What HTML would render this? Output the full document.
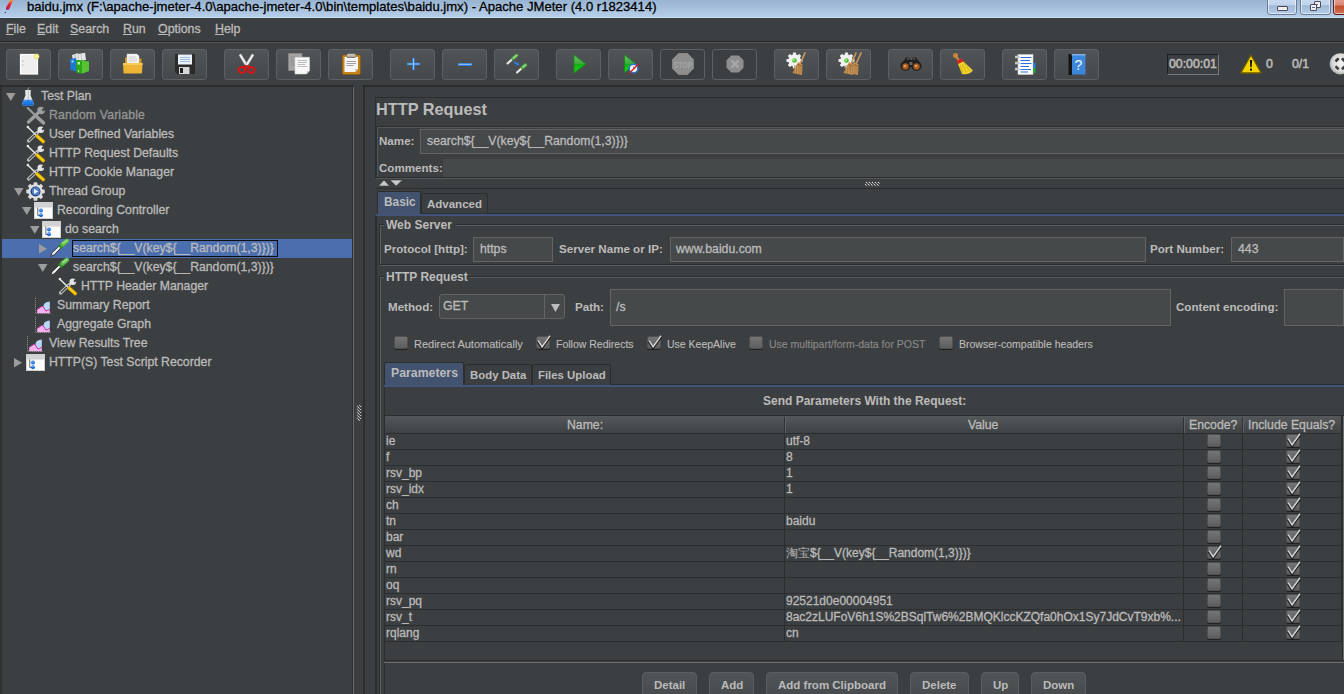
<!DOCTYPE html><html><head><meta charset="utf-8"><style>
html,body{margin:0;padding:0;}
body{width:1344px;height:694px;overflow:hidden;position:relative;background:#3c3f41;font-family:"Liberation Sans",sans-serif;}
.a{position:absolute;}
.t{position:absolute;white-space:pre;line-height:0;-webkit-text-stroke:0.3px currentColor;}
u{text-decoration:underline;text-underline-offset:1px;}
</style></head><body>
<div class="a" style="left:0px;top:0px;width:1344px;height:18px;background:linear-gradient(#98b3d1,#b8d0ea);"></div>
<div class="a" style="left:0px;top:17px;width:1344px;height:1px;background:#c8ddf4;"></div>
<div class="t" style="left:27px;top:7px;font-size:13.1px;color:#000;">baidu.jmx (F:\apache-jmeter-4.0\apache-jmeter-4.0\bin\templates\baidu.jmx) - Apache JMeter (4.0 r1823414)</div>
<svg class="a" style="left:0px;top:0px;" width="16" height="16" viewBox="0 0 16 16"><defs><linearGradient id="fth" x1="0" y1="0" x2="0" y2="1"><stop offset="0" stop-color="#ff9a10"/><stop offset="0.45" stop-color="#e8203a"/><stop offset="0.8" stop-color="#c8203a"/><stop offset="1" stop-color="#8a2a9a"/></linearGradient></defs><path d="M13.2 0 L10.5 0 L6 7.5 L6 10 L9 9.5 Z" fill="url(#fth)"/><circle cx="5.4" cy="12.5" r="0.7" fill="#4a2a8a"/></svg>
<div class="a" style="left:1267px;top:-3px;width:30px;height:18px;box-sizing:border-box;border:1px solid #6a7d96;border-radius:3px;background:linear-gradient(#c9dbef 0%,#c0d4eb 42%,#9fb9d6 48%,#b5cde8 100%);box-shadow:inset 0 0 0 1px rgba(255,255,255,.55);"><div class="a" style="left:9px;top:8px;width:9px;height:3px;border:1px solid #4a4a5a;border-radius:1px;background:#eee;"></div></div>
<div class="a" style="left:1300px;top:-3px;width:31px;height:18px;box-sizing:border-box;border:1px solid #6a7d96;border-radius:3px;background:linear-gradient(#c9dbef 0%,#c0d4eb 42%,#9fb9d6 48%,#b5cde8 100%);box-shadow:inset 0 0 0 1px rgba(255,255,255,.55);"><div class="a" style="left:13px;top:3px;width:5px;height:5px;border:1px solid #4a4a5a;border-radius:1px;background:#eee;"><div class="a" style="left:1px;top:2px;width:2px;height:1px;background:#5a6a90;"></div></div><div class="a" style="left:9px;top:6px;width:5px;height:5px;border:1px solid #4a4a5a;border-radius:1px;background:#eee;"><div class="a" style="left:1px;top:2px;width:3px;height:1px;background:#5a6a90;"></div></div></div>
<div class="a" style="left:1333px;top:-3px;width:30px;height:18px;box-sizing:border-box;border:1px solid #5b1d1d;border-radius:3px;background:linear-gradient(#e8a493 0%,#d98672 45%,#c1502f 50%,#cf7156 100%);box-shadow:inset 0 0 0 1px rgba(255,255,255,.55);"></div>
<div class="a" style="left:0px;top:18px;width:1344px;height:23px;background:#3c3f41;"></div>
<div class="a" style="left:0px;top:41px;width:1344px;height:1px;background:#262729;"></div>
<div class="a" style="left:0px;top:42px;width:1344px;height:1px;background:#555759;"></div>
<div class="t" style="left:6px;top:29px;font-size:12.4px;color:#bbbbbb;"><u>F</u>ile</div>
<div class="t" style="left:37px;top:29px;font-size:12.4px;color:#bbbbbb;"><u>E</u>dit</div>
<div class="t" style="left:70px;top:29px;font-size:12.4px;color:#bbbbbb;"><u>S</u>earch</div>
<div class="t" style="left:123px;top:29px;font-size:12.4px;color:#bbbbbb;"><u>R</u>un</div>
<div class="t" style="left:158px;top:29px;font-size:12.4px;color:#bbbbbb;"><u>O</u>ptions</div>
<div class="t" style="left:215px;top:29px;font-size:12.4px;color:#bbbbbb;"><u>H</u>elp</div>
<div class="a" style="left:0px;top:43px;width:1344px;height:42px;background:#3c3f41;"></div>
<div class="a" style="left:0px;top:85px;width:354px;height:2px;background:#2a2c2e;"></div>
<div class="a" style="left:363px;top:85px;width:981px;height:2px;background:#2a2c2e;"></div>
<div class="a" style="left:6px;top:49px;width:45px;height:31px;box-sizing:border-box;border:1px solid #5e6163;border-radius:3px;background:linear-gradient(#505456,#45494b);"></div>
<div class="a" style="left:58px;top:49px;width:45px;height:31px;box-sizing:border-box;border:1px solid #5e6163;border-radius:3px;background:linear-gradient(#505456,#45494b);"></div>
<div class="a" style="left:110px;top:49px;width:45px;height:31px;box-sizing:border-box;border:1px solid #5e6163;border-radius:3px;background:linear-gradient(#505456,#45494b);"></div>
<div class="a" style="left:162px;top:49px;width:45px;height:31px;box-sizing:border-box;border:1px solid #5e6163;border-radius:3px;background:linear-gradient(#505456,#45494b);"></div>
<div class="a" style="left:224px;top:49px;width:45px;height:31px;box-sizing:border-box;border:1px solid #5e6163;border-radius:3px;background:linear-gradient(#505456,#45494b);"></div>
<div class="a" style="left:276px;top:49px;width:45px;height:31px;box-sizing:border-box;border:1px solid #5e6163;border-radius:3px;background:linear-gradient(#505456,#45494b);"></div>
<div class="a" style="left:328px;top:49px;width:45px;height:31px;box-sizing:border-box;border:1px solid #5e6163;border-radius:3px;background:linear-gradient(#505456,#45494b);"></div>
<div class="a" style="left:390px;top:49px;width:45px;height:31px;box-sizing:border-box;border:1px solid #5e6163;border-radius:3px;background:linear-gradient(#505456,#45494b);"></div>
<div class="a" style="left:442px;top:49px;width:45px;height:31px;box-sizing:border-box;border:1px solid #5e6163;border-radius:3px;background:linear-gradient(#505456,#45494b);"></div>
<div class="a" style="left:494px;top:49px;width:45px;height:31px;box-sizing:border-box;border:1px solid #5e6163;border-radius:3px;background:linear-gradient(#505456,#45494b);"></div>
<div class="a" style="left:556px;top:49px;width:45px;height:31px;box-sizing:border-box;border:1px solid #5e6163;border-radius:3px;background:linear-gradient(#505456,#45494b);"></div>
<div class="a" style="left:608px;top:49px;width:45px;height:31px;box-sizing:border-box;border:1px solid #5e6163;border-radius:3px;background:linear-gradient(#505456,#45494b);"></div>
<div class="a" style="left:660px;top:49px;width:45px;height:31px;box-sizing:border-box;border:1px solid #5e6163;border-radius:3px;background:#3c3f41;"></div>
<div class="a" style="left:712px;top:49px;width:45px;height:31px;box-sizing:border-box;border:1px solid #5e6163;border-radius:3px;background:#3c3f41;"></div>
<div class="a" style="left:774px;top:49px;width:45px;height:31px;box-sizing:border-box;border:1px solid #5e6163;border-radius:3px;background:linear-gradient(#505456,#45494b);"></div>
<div class="a" style="left:826px;top:49px;width:45px;height:31px;box-sizing:border-box;border:1px solid #5e6163;border-radius:3px;background:linear-gradient(#505456,#45494b);"></div>
<div class="a" style="left:888px;top:49px;width:45px;height:31px;box-sizing:border-box;border:1px solid #5e6163;border-radius:3px;background:linear-gradient(#505456,#45494b);"></div>
<div class="a" style="left:940px;top:49px;width:45px;height:31px;box-sizing:border-box;border:1px solid #5e6163;border-radius:3px;background:linear-gradient(#505456,#45494b);"></div>
<div class="a" style="left:1002px;top:49px;width:45px;height:31px;box-sizing:border-box;border:1px solid #5e6163;border-radius:3px;background:linear-gradient(#505456,#45494b);"></div>
<div class="a" style="left:1054px;top:49px;width:45px;height:31px;box-sizing:border-box;border:1px solid #5e6163;border-radius:3px;background:linear-gradient(#505456,#45494b);"></div>
<div class="a" style="left:1167px;top:54px;width:52px;height:21px;box-sizing:border-box;border:1px solid;border-color:#1e1f20 #77797b #77797b #1e1f20;background:#3c3f41;"></div>
<div class="t" style="left:1169px;top:64px;font-size:12.3px;color:#bbbbbb;-webkit-text-stroke:0.55px currentColor;">00:00:01</div>
<div class="t" style="left:1266px;top:64px;font-size:12.3px;color:#bbbbbb;-webkit-text-stroke:0.55px currentColor;">0</div>
<div class="t" style="left:1292px;top:64px;font-size:12.3px;color:#bbbbbb;-webkit-text-stroke:0.55px currentColor;">0/1</div>
<svg class="a" style="left:1240px;top:54px;" width="22" height="20" viewBox="0 0 22 20"><path d="M11 1 L21.2 19 L0.8 19Z" fill="#f6d400" stroke="#6e5c00" stroke-width="1.3" stroke-linejoin="round"/><path d="M9.9 6 H12.1 L11.7 13.2 H10.3Z" fill="#111"/><rect x="10" y="14.6" width="2" height="2" fill="#111"/></svg>
<svg class="a" style="left:1329px;top:53px;" width="15" height="22" viewBox="0 0 15 22"><defs><radialGradient id="rb" cx="0.55" cy="0.45" r="0.6"><stop offset="0" stop-color="#f4f4f4"/><stop offset="0.7" stop-color="#d8d8d8"/><stop offset="1" stop-color="#a0a0a0"/></radialGradient></defs><circle cx="11.3" cy="10.8" r="10.6" fill="url(#rb)"/><rect x="5.900000000000001" y="5.6000000000000005" width="4.4" height="2.6" rx="0.6" fill="#3a3a3a" transform="rotate(-45 8.100000000000001 6.9)"/><rect x="5.900000000000001" y="13.4" width="4.4" height="2.6" rx="0.6" fill="#3a3a3a" transform="rotate(45 8.100000000000001 14.700000000000001)"/><rect x="12.3" y="5.6000000000000005" width="4.4" height="2.6" rx="0.6" fill="#3a3a3a" transform="rotate(45 14.5 6.9)"/><rect x="12.3" y="13.4" width="4.4" height="2.6" rx="0.6" fill="#3a3a3a" transform="rotate(-45 14.5 14.700000000000001)"/></svg>
<svg class="a" style="left:19px;top:53px;overflow:visible" width="22" height="22" viewBox="0 0 22 22"><rect x="1.5" y="1.5" width="17" height="19.5" fill="#eeeeee" stroke="#ffffff" stroke-width="1.2"/><circle cx="17.5" cy="3.5" r="2.8" fill="#f2e27a"/><circle cx="17.5" cy="3.5" r="1.4" fill="#fff8c0"/><circle cx="3.8" cy="8" r="0.55" fill="#777"/><circle cx="3.8" cy="12" r="0.55" fill="#777"/></svg>
<svg class="a" style="left:69px;top:52px;overflow:visible" width="22" height="23" viewBox="0 0 22 23"><path d="M3 3 L9 1 L10 8 L4 10Z" fill="#dedede"/><path d="M9 2 L16 0.8 L17 8 L10 9Z" fill="#e8e8e8"/><path d="M6 3 L7 9 M12 2 L13 9" stroke="#aaa" stroke-width="0.6"/><path d="M1 7 L7 6 L7.5 19.5 L1.5 18Z" fill="#1c78d0"/><path d="M2.5 8.5 L4.5 8.3 L4.6 10.5 L2.6 10.7Z" fill="#9cd0ff"/><path d="M7 8 L13 8.3 L20 9.8 L20 19 L13 21.5 L7.5 21Z" fill="#2aa81a"/><path d="M13 8.3 L20 9.8 L20 19 L13 21.5Z" fill="#56c234"/><path d="M8.5 10 L11 10 L11 12.5 L8.5 12.5Z" fill="#b8ffa0"/><circle cx="9.5" cy="19" r="0.7" fill="#fff"/></svg>
<svg class="a" style="left:122px;top:53px;overflow:visible" width="22" height="22" viewBox="0 0 22 22"><path d="M3 4.5 H7 L8 5.5 H19.5 V19 H3Z" fill="#cf9418"/><path d="M5 1 H15 L17 3 V12 H5Z" fill="#f6f6f6" stroke="#cfcfcf" stroke-width="0.5"/><path d="M6.5 4 H14 M6.5 6 H15 M6.5 8 H15" stroke="#bbb" stroke-width="0.7"/><path d="M1 10 H20.5 L20 19.5 Q20 20.5 19 20.5 H2.5 Q1.5 20.5 1.5 19.5Z" fill="#eeb534"/><path d="M1 10 H20.5 V12 H1Z" fill="#f6c85a"/></svg>
<svg class="a" style="left:175px;top:54px;overflow:visible" width="20" height="20" viewBox="0 0 20 20"><path d="M1 0 H19 Q20 0 20 1 V19 Q20 20 19 20 H2 L0 18 V1 Q0 0 1 0Z" fill="#2b2b2b"/><rect x="3" y="0.5" width="14" height="10" fill="#e9f1fa"/><path d="M5 3.5 H15 M5 5.5 H15 M5 7.5 H15" stroke="#8fb0d0" stroke-width="0.8"/><rect x="4" y="13" width="10.5" height="7" fill="#d6d6d6"/><rect x="5" y="14" width="3" height="5" fill="#1e1e1e"/></svg>
<svg class="a" style="left:237px;top:52px;overflow:visible" width="19" height="23" viewBox="0 0 19 23"><path d="M3 2.5 L10 14" stroke="#9a9a9a" stroke-width="3"/><path d="M3 2.5 L10 14" stroke="#f2f2f2" stroke-width="2"/><path d="M16 2.5 L9 14" stroke="#9a9a9a" stroke-width="3"/><path d="M16 2.5 L9 14" stroke="#f2f2f2" stroke-width="2"/><path d="M9.5 13.5 L6 16 M9.5 13.5 L13 16" stroke="#e01010" stroke-width="2"/><ellipse cx="5" cy="18" rx="3.3" ry="3" fill="none" stroke="#e01212" stroke-width="2"/><ellipse cx="14.2" cy="18" rx="3.3" ry="3" fill="none" stroke="#e01212" stroke-width="2"/></svg>
<svg class="a" style="left:288px;top:53px;overflow:visible" width="23" height="22" viewBox="0 0 23 22"><rect x="0.5" y="0.5" width="13.5" height="17" fill="#a4a4a4" stroke="#8a8a8a" stroke-width="0.6"/><path d="M2.5 4 H12 M2.5 6 H12 M2.5 8 H12 M2.5 10 H12 M2.5 12 H12" stroke="#8e8e8e" stroke-width="0.7"/><path d="M7 4.3 H21.5 V17.5 L18.5 21 H7Z" fill="#f8f8f8" stroke="#d4d4d4" stroke-width="0.6"/><path d="M18.5 21 V18 H21.5Z" fill="#cfcfcf"/><path d="M9.5 7.5 H19 M9.5 9.5 H19 M9.5 11.5 H17 M9.5 13.5 H19" stroke="#adadad" stroke-width="0.8"/></svg>
<svg class="a" style="left:342px;top:53px;overflow:visible" width="19" height="22" viewBox="0 0 19 22"><rect x="0.3" y="2" width="18" height="19.5" rx="1.5" fill="#c88418" stroke="#8a5a10" stroke-width="0.6"/><path d="M2.5 4 H16 V15.5 L13 19 H2.5Z" fill="#f6f6f6"/><path d="M13 19 V16 H16Z" fill="#cfcfcf"/><rect x="5" y="0.8" width="8.5" height="3.8" rx="1" fill="#bdbdb0"/><rect x="5" y="3.8" width="8.5" height="0.9" fill="#555"/><path d="M4.5 8.5 H14 M4.5 10.5 H14 M4.5 12.5 H11.5" stroke="#9a9a9a" stroke-width="0.9"/></svg>
<svg class="a" style="left:406px;top:57px;overflow:visible" width="15" height="14" viewBox="0 0 15 14"><path d="M7.5 1 V13 M1 7 H14" stroke="#2f7fdc" stroke-width="2.6"/><path d="M7.5 1.5 V12.5 M1.5 7 H13.5" stroke="#9cc8ff" stroke-width="0.9"/></svg>
<svg class="a" style="left:457px;top:62px;overflow:visible" width="16" height="5" viewBox="0 0 16 5"><path d="M1 2.5 H15" stroke="#2f7fdc" stroke-width="2.8"/><path d="M1.5 2.3 H14.5" stroke="#a8d0ff" stroke-width="0.9"/></svg>
<svg class="a" style="left:505px;top:53px;overflow:visible" width="23" height="22" viewBox="0 0 23 22"><path d="M2.5 10.5 L8.5 5" stroke="#666" stroke-width="2.8" stroke-linecap="round"/><path d="M2.5 10.5 L8.5 5" stroke="#eee" stroke-width="1.8" stroke-linecap="round"/><path d="M8.0 5.5 L11.5 2.5" stroke="#4c9a3c" stroke-width="3.6" stroke-linecap="round"/><path d="M8.5 5 L11.5 2.5" stroke="#8fd27a" stroke-width="2" stroke-linecap="round"/><path d="M12 19.5 L18 14" stroke="#666" stroke-width="2.8" stroke-linecap="round"/><path d="M12 19.5 L18 14" stroke="#eee" stroke-width="1.8" stroke-linecap="round"/><path d="M17.5 14.5 L20.5 12" stroke="#4c9a3c" stroke-width="3.6" stroke-linecap="round"/><path d="M18 14 L20.5 12" stroke="#8fd27a" stroke-width="2" stroke-linecap="round"/><path d="M9 8.5 Q10.5 10.5 12.5 11" stroke="#2a7ff0" stroke-width="1.4" fill="none"/><path d="M11 12.5 L14.5 12 L12.5 9Z" fill="#2a7ff0"/></svg>
<svg class="a" style="left:573px;top:54px;overflow:visible" width="14" height="20" viewBox="0 0 14 20"><defs><linearGradient id="gp" x1="0" y1="0" x2="0" y2="1"><stop offset="0" stop-color="#6cc46a"/><stop offset="0.5" stop-color="#3aa83a"/><stop offset="0.52" stop-color="#10b010"/><stop offset="1" stop-color="#1fd31f"/></linearGradient></defs><path d="M1 1 L13 10 L1 19Z" fill="url(#gp)" stroke="#138a13" stroke-width="0.8" stroke-linejoin="round"/></svg>
<svg class="a" style="left:623px;top:54px;overflow:visible" width="17" height="21" viewBox="0 0 17 21"><path d="M1.5 1 L13 10 L1.5 18.5Z" fill="url(#gp)" stroke="#138a13" stroke-width="0.8" stroke-linejoin="round"/><circle cx="10.5" cy="14.5" r="4.3" fill="#f4f4f4" stroke="#2e74d0" stroke-width="1.4"/><path d="M10.5 12 V14.5 H12.5" stroke="#777" stroke-width="0.7" fill="none"/><path d="M6 19.5 L15.5 10" stroke="#e01818" stroke-width="1.3"/></svg>
<svg class="a" style="left:672px;top:53px;overflow:visible" width="22" height="22" viewBox="0 0 22 22"><path d="M6.5 0.5 H15.5 L21.5 6.5 V15.5 L15.5 21.5 H6.5 L0.5 15.5 V6.5Z" fill="#8e8e8e" stroke="#9a9a9a" stroke-width="0.6"/><text x="11" y="14.6" font-family="Liberation Sans" font-weight="bold" font-size="9" text-anchor="middle" fill="#a4a4a4" textLength="19" lengthAdjust="spacingAndGlyphs">STOP</text></svg>
<svg class="a" style="left:726px;top:55px;overflow:visible" width="18" height="18" viewBox="0 0 18 18"><path d="M5.3 0.5 H12.7 L17.5 5.3 V12.7 L12.7 17.5 H5.3 L0.5 12.7 V5.3Z" fill="#8e8e8e"/><path d="M5.5 5.5 L12.5 12.5 M12.5 5.5 L5.5 12.5" stroke="#a8a8a8" stroke-width="2.4"/></svg>
<svg class="a" style="left:786px;top:52px;overflow:visible" width="22" height="24" viewBox="0 0 22 24"><rect x="6.9" y="0.5" width="3.2" height="16" rx="0.6" fill="#ececec" transform="rotate(0 8.5 8.5)"/><rect x="6.9" y="0.5" width="3.2" height="16" rx="0.6" fill="#ececec" transform="rotate(45 8.5 8.5)"/><rect x="6.9" y="0.5" width="3.2" height="16" rx="0.6" fill="#ececec" transform="rotate(90 8.5 8.5)"/><rect x="6.9" y="0.5" width="3.2" height="16" rx="0.6" fill="#ececec" transform="rotate(135 8.5 8.5)"/><circle cx="8.5" cy="8.5" r="6.2" fill="#f0f0f0"/><circle cx="8.5" cy="8.5" r="2.3" fill="#4cc02c"/><circle cx="7.9" cy="7.9" r="0.9" fill="#b8ff9a"/><g transform="translate(0 0)"><path d="M19 1 L14 12" stroke="#c4955c" stroke-width="1.8" stroke-linecap="round"/><path d="M12 10 L16.5 12.5 L16 23 L6.5 21 Z" fill="#c9955a"/><path d="M9 13 L8 21 M11 13 L10.5 22 M13 12 L13 22 M15 13 L15 22" stroke="#9a6a32" stroke-width="0.7"/><path d="M11.5 12.5 L16.5 14" stroke="#8a5a28" stroke-width="0.8"/></g></svg>
<svg class="a" style="left:838px;top:52px;overflow:visible" width="24" height="24" viewBox="0 0 24 24"><rect x="6.9" y="0.5" width="3.2" height="16" rx="0.6" fill="#ececec" transform="rotate(0 8.5 8.5)"/><rect x="6.9" y="0.5" width="3.2" height="16" rx="0.6" fill="#ececec" transform="rotate(45 8.5 8.5)"/><rect x="6.9" y="0.5" width="3.2" height="16" rx="0.6" fill="#ececec" transform="rotate(90 8.5 8.5)"/><rect x="6.9" y="0.5" width="3.2" height="16" rx="0.6" fill="#ececec" transform="rotate(135 8.5 8.5)"/><circle cx="8.5" cy="8.5" r="6.2" fill="#f0f0f0"/><circle cx="8.5" cy="8.5" r="2.3" fill="#4cc02c"/><circle cx="7.9" cy="7.9" r="0.9" fill="#b8ff9a"/><g transform="translate(-1 0)"><path d="M19 1 L14 12" stroke="#c4955c" stroke-width="1.8" stroke-linecap="round"/><path d="M12 10 L16.5 12.5 L16 23 L6.5 21 Z" fill="#c9955a"/><path d="M9 13 L8 21 M11 13 L10.5 22 M13 12 L13 22 M15 13 L15 22" stroke="#9a6a32" stroke-width="0.7"/><path d="M11.5 12.5 L16.5 14" stroke="#8a5a28" stroke-width="0.8"/></g><g transform="translate(4 0)"><path d="M19 1 L14 12" stroke="#c4955c" stroke-width="1.8" stroke-linecap="round"/><path d="M12 10 L16.5 12.5 L16 23 L6.5 21 Z" fill="#c9955a"/><path d="M9 13 L8 21 M11 13 L10.5 22 M13 12 L13 22 M15 13 L15 22" stroke="#9a6a32" stroke-width="0.7"/><path d="M11.5 12.5 L16.5 14" stroke="#8a5a28" stroke-width="0.8"/></g></svg>
<svg class="a" style="left:899px;top:56px;overflow:visible" width="24" height="16" viewBox="0 0 24 16"><path d="M4 6 L7 1.5 H10 L11 4 H13 L14 1.5 H17 L20 6 L22 11 H2Z" fill="#1f1f1f"/><circle cx="6.5" cy="10" r="5" fill="#1f1f1f"/><circle cx="17.5" cy="10" r="5" fill="#1f1f1f"/><circle cx="6.5" cy="10.5" r="3.2" fill="#a55a20"/><circle cx="17.5" cy="10.5" r="3.2" fill="#a55a20"/><circle cx="6" cy="10" r="1.3" fill="#e6a060"/><circle cx="17" cy="10" r="1.3" fill="#e6a060"/><path d="M8 3 H9.5 M14.5 3 H16" stroke="#bbb" stroke-width="0.8"/><rect x="10.5" y="6" width="3" height="3" fill="#666"/></svg>
<svg class="a" style="left:951px;top:52px;overflow:visible" width="23" height="24" viewBox="0 0 23 24"><circle cx="4.5" cy="3.5" r="2.5" fill="#c8863a"/><path d="M5 4.5 L9 10" stroke="#c8863a" stroke-width="2.2"/><path d="M5.5 9 L11 6.5 L12.5 9.5 L7 12Z" fill="#e02020"/><path d="M7 12 L12.5 9.5 L22 18.5 Q17 23.5 11 22Z" fill="#f2d22a"/><path d="M9 13.5 L12 21 M11 12 L15.5 20.5 M13 11 L19 19" stroke="#c0a000" stroke-width="0.7"/></svg>
<svg class="a" style="left:1014px;top:54px;overflow:visible" width="23" height="21" viewBox="0 0 23 21"><rect x="4" y="0.5" width="15" height="20" fill="#ffffff" stroke="#c8c8c8" stroke-width="0.6"/><path d="M6.5 3.5 H17.5 M6.5 6.5 H16 M6.5 9.5 H17.5 M6.5 12.5 H15 M6.5 15.5 H17 M6.5 18 H14" stroke="#2f6ee0" stroke-width="1.2"/><path d="M1 3 H5.5 M1 9 H5.5 M1 15 H5.5" stroke="#d8d8d8" stroke-width="2.4"/><path d="M1 3 H5.5 M1 9 H5.5 M1 15 H5.5" stroke="#888" stroke-width="0.5"/><rect x="19" y="9" width="2.5" height="5" fill="#2e7de0"/><rect x="19" y="14" width="2.5" height="5" fill="#28a838"/></svg>
<svg class="a" style="left:1068px;top:54px;overflow:visible" width="18" height="21" viewBox="0 0 18 21"><rect x="3.5" y="0.5" width="14" height="20" fill="#3c86dc"/><rect x="0.5" y="0" width="3.5" height="21" fill="#151515"/><rect x="3.5" y="0.3" width="14" height="1" fill="#a8d0ff"/><text x="10.5" y="15.5" font-family="Liberation Sans" font-size="14" text-anchor="middle" fill="#f4f8ff">?</text></svg>
<div class="a" style="left:0px;top:87px;width:352px;height:607px;background:#3c3f41;"></div>
<div class="a" style="left:0px;top:87px;width:2px;height:607px;background:#2f3133;"></div>
<div class="a" style="left:352px;top:87px;width:1px;height:607px;background:#2b2d2e;"></div>
<div class="a" style="left:353px;top:87px;width:1px;height:607px;background:#6b6d6f;"></div>
<div class="a" style="left:354px;top:87px;width:9px;height:607px;background:#3c3f41;"></div>
<div class="a" style="left:363px;top:87px;width:2px;height:607px;background:#2b2d2e;"></div>
<svg class="a" style="left:355px;top:403px" width="8" height="19" viewBox="0 0 8 19"><circle cx="4.5" cy="2.4000000000000004" r="0.6" fill="#b8b8b8"/><circle cx="5.6" cy="3.5000000000000004" r="0.6" fill="#f2f2f2"/><circle cx="2.3" cy="3.2" r="0.6" fill="#b8b8b8"/><circle cx="3.4" cy="4.300000000000001" r="0.6" fill="#f2f2f2"/><circle cx="4.5" cy="5.4" r="0.6" fill="#b8b8b8"/><circle cx="5.6" cy="6.5" r="0.6" fill="#f2f2f2"/><circle cx="2.3" cy="6.2" r="0.6" fill="#b8b8b8"/><circle cx="3.4" cy="7.300000000000001" r="0.6" fill="#f2f2f2"/><circle cx="4.5" cy="8.4" r="0.6" fill="#b8b8b8"/><circle cx="5.6" cy="9.5" r="0.6" fill="#f2f2f2"/><circle cx="2.3" cy="9.2" r="0.6" fill="#b8b8b8"/><circle cx="3.4" cy="10.299999999999999" r="0.6" fill="#f2f2f2"/><circle cx="4.5" cy="11.399999999999999" r="0.6" fill="#b8b8b8"/><circle cx="5.6" cy="12.5" r="0.6" fill="#f2f2f2"/><circle cx="2.3" cy="12.2" r="0.6" fill="#b8b8b8"/><circle cx="3.4" cy="13.299999999999999" r="0.6" fill="#f2f2f2"/><circle cx="4.5" cy="14.399999999999999" r="0.6" fill="#b8b8b8"/><circle cx="5.6" cy="15.5" r="0.6" fill="#f2f2f2"/><circle cx="2.3" cy="15.2" r="0.6" fill="#b8b8b8"/><circle cx="3.4" cy="16.3" r="0.6" fill="#f2f2f2"/><circle cx="4.5" cy="17.4" r="0.6" fill="#b8b8b8"/></svg>
<svg class="a" style="left:6px;top:93px;" width="10" height="8" viewBox="0 0 10 8"><path d="M0 0 H9.5 L4.75 8Z" fill="#9c9c9c"/></svg>
<svg class="a" style="left:22px;top:87px" width="12" height="19" viewBox="0 0 12 19"><path d="M5.5 3 L7 0.3" stroke="#aaa" stroke-width="0.9"/><path d="M3.2 3 L8.8 3 L8.6 8.5 L11.6 15.8 Q12 18.6 9.8 18.6 L2.2 18.6 Q0 18.6 0.4 15.8 L3.4 8.5 Z" fill="#e6e6e6"/><path d="M6.5 3.5 L6.5 12" stroke="#c8c8c8" stroke-width="1"/><path d="M1.7 12.8 L10.3 12.8 L11.6 16 Q11.9 18.6 9.8 18.6 L2.2 18.6 Q0.1 18.6 0.4 16Z" fill="#1b7ae8"/><path d="M2.5 13.8 L4.5 13.8 M7.5 13.8 L9.5 13.8" stroke="#8fc2ff" stroke-width="0.9"/><path d="M1 17.5 Q6 19 11 17.5" stroke="#0d5cc4" stroke-width="1" fill="none"/></svg>
<div class="t" style="left:41px;top:96px;font-size:12.25px;color:#bbbbbb;">Test Plan</div>
<svg class="a" style="left:25px;top:105px" width="23" height="22" viewBox="0 0 23 22"><path d="M3.5 17 L12.5 8.5" stroke="#9d9d9d" stroke-width="3.4" stroke-linecap="round"/><circle cx="16" cy="5.5" r="3.8" fill="#9d9d9d"/><path d="M16.8 4.8 L20.5 1.2 L22 3 L18 6.5Z" fill="#3c3f41"/><path d="M2.7 3 L11.5 11.5" stroke="#9d9d9d" stroke-width="2" stroke-linecap="round"/><path d="M12 12 L18.5 17.8" stroke="#9d9d9d" stroke-width="3.6" stroke-linecap="round"/></svg>
<div class="t" style="left:49px;top:115px;font-size:12.25px;color:#959595;letter-spacing:0.15px;">Random Variable</div>
<svg class="a" style="left:25px;top:124px" width="23" height="22" viewBox="0 0 23 22"><path d="M3.5 17 L12.5 8.5" stroke="#bdbdbd" stroke-width="3.2" stroke-linecap="round"/><path d="M4.2 16.3 L11.5 9.5" stroke="#36383a" stroke-width="1.1" stroke-linecap="round"/><circle cx="15.8" cy="5.7" r="3.3" fill="#e6e6e6"/><path d="M16.4 5 L19.8 1.6 L21.4 3.2 L17.8 6.4Z" fill="#3c3f41"/><circle cx="2.8" cy="3" r="1.2" fill="#f0f0f0"/><path d="M2.7 3 L11.5 11.5" stroke="#e8e8e8" stroke-width="1.5" stroke-linecap="round"/><path d="M12.2 12.2 L18.3 17.6" stroke="#c99a00" stroke-width="3.6" stroke-linecap="round"/><path d="M12.2 12.2 L18.3 17.6" stroke="#f6cc10" stroke-width="2.3" stroke-linecap="round"/></svg>
<div class="t" style="left:49px;top:134px;font-size:12.25px;color:#bbbbbb;">User Defined Variables</div>
<svg class="a" style="left:25px;top:143px" width="23" height="22" viewBox="0 0 23 22"><path d="M3.5 17 L12.5 8.5" stroke="#bdbdbd" stroke-width="3.2" stroke-linecap="round"/><path d="M4.2 16.3 L11.5 9.5" stroke="#36383a" stroke-width="1.1" stroke-linecap="round"/><circle cx="15.8" cy="5.7" r="3.3" fill="#e6e6e6"/><path d="M16.4 5 L19.8 1.6 L21.4 3.2 L17.8 6.4Z" fill="#3c3f41"/><circle cx="2.8" cy="3" r="1.2" fill="#f0f0f0"/><path d="M2.7 3 L11.5 11.5" stroke="#e8e8e8" stroke-width="1.5" stroke-linecap="round"/><path d="M12.2 12.2 L18.3 17.6" stroke="#c99a00" stroke-width="3.6" stroke-linecap="round"/><path d="M12.2 12.2 L18.3 17.6" stroke="#f6cc10" stroke-width="2.3" stroke-linecap="round"/></svg>
<div class="t" style="left:49px;top:153px;font-size:12.25px;color:#bbbbbb;">HTTP Request Defaults</div>
<svg class="a" style="left:25px;top:162px" width="23" height="22" viewBox="0 0 23 22"><path d="M3.5 17 L12.5 8.5" stroke="#bdbdbd" stroke-width="3.2" stroke-linecap="round"/><path d="M4.2 16.3 L11.5 9.5" stroke="#36383a" stroke-width="1.1" stroke-linecap="round"/><circle cx="15.8" cy="5.7" r="3.3" fill="#e6e6e6"/><path d="M16.4 5 L19.8 1.6 L21.4 3.2 L17.8 6.4Z" fill="#3c3f41"/><circle cx="2.8" cy="3" r="1.2" fill="#f0f0f0"/><path d="M2.7 3 L11.5 11.5" stroke="#e8e8e8" stroke-width="1.5" stroke-linecap="round"/><path d="M12.2 12.2 L18.3 17.6" stroke="#c99a00" stroke-width="3.6" stroke-linecap="round"/><path d="M12.2 12.2 L18.3 17.6" stroke="#f6cc10" stroke-width="2.3" stroke-linecap="round"/></svg>
<div class="t" style="left:49px;top:172px;font-size:12.25px;color:#bbbbbb;">HTTP Cookie Manager</div>
<svg class="a" style="left:14px;top:188px;" width="10" height="8" viewBox="0 0 10 8"><path d="M0 0 H9.5 L4.75 8Z" fill="#9c9c9c"/></svg>
<svg class="a" style="left:26px;top:182px" width="19" height="19" viewBox="0 0 19 19"><rect x="7.6" y="0.2" width="3.8" height="18.6" rx="0.8" fill="#d8d8d8" transform="rotate(0 9.5 9.5)"/><rect x="7.6" y="0.2" width="3.8" height="18.6" rx="0.8" fill="#d8d8d8" transform="rotate(45 9.5 9.5)"/><rect x="7.6" y="0.2" width="3.8" height="18.6" rx="0.8" fill="#d8d8d8" transform="rotate(90 9.5 9.5)"/><rect x="7.6" y="0.2" width="3.8" height="18.6" rx="0.8" fill="#d8d8d8" transform="rotate(135 9.5 9.5)"/><circle cx="9.5" cy="9.5" r="7.2" fill="#e2e2e2"/><circle cx="9.5" cy="9.5" r="5" fill="#173f86"/><circle cx="9.7" cy="9.2" r="4" fill="#4f7fc0"/><path d="M8 6.8 L12.3 9.4 L8 12Z" fill="#f2f2f2"/></svg>
<div class="t" style="left:49px;top:191px;font-size:12.25px;color:#bbbbbb;">Thread Group</div>
<svg class="a" style="left:22px;top:207px;" width="10" height="8" viewBox="0 0 10 8"><path d="M0 0 H9.5 L4.75 8Z" fill="#9c9c9c"/></svg>
<svg class="a" style="left:34px;top:202px" width="19" height="17" viewBox="0 0 19 17"><rect x="0.5" y="0.5" width="18" height="16" fill="#fbfbfb" stroke="#d0d0d0"/><rect x="1" y="1" width="17" height="4.5" fill="#d2d2d2"/><path d="M3.8 5.5 V13.5 H6" stroke="#444" stroke-width="0.8" fill="none"/><circle cx="7" cy="8.6" r="2" fill="#1f6fe0"/><circle cx="7" cy="13.2" r="2" fill="#1f6fe0"/><path d="M5.5 8 H8.5 M5.5 12.6 H8.5" stroke="#9cc4ff" stroke-width="0.7"/></svg>
<div class="t" style="left:57px;top:210px;font-size:12.25px;color:#bbbbbb;">Recording Controller</div>
<svg class="a" style="left:30px;top:226px;" width="10" height="8" viewBox="0 0 10 8"><path d="M0 0 H9.5 L4.75 8Z" fill="#9c9c9c"/></svg>
<svg class="a" style="left:42px;top:221px" width="19" height="17" viewBox="0 0 19 17"><rect x="0.5" y="0.5" width="18" height="16" fill="#fbfbfb" stroke="#d0d0d0"/><rect x="1" y="1" width="17" height="4.5" fill="#d2d2d2"/><path d="M3.8 5.5 V13.5 H6" stroke="#444" stroke-width="0.8" fill="none"/><circle cx="7" cy="8.6" r="2" fill="#1f6fe0"/><circle cx="7" cy="13.2" r="2" fill="#1f6fe0"/><path d="M5.5 8 H8.5 M5.5 12.6 H8.5" stroke="#9cc4ff" stroke-width="0.7"/></svg>
<div class="t" style="left:65px;top:229px;font-size:12.25px;color:#bbbbbb;">do search</div>
<div class="a" style="left:2px;top:239px;width:350px;height:19px;background:#4b6eaf;"></div>
<div class="a" style="left:72px;top:240px;width:206px;height:17px;box-sizing:border-box;border:1px solid #0d0d0d;"></div>
<svg class="a" style="left:39px;top:244px;" width="8" height="10" viewBox="0 0 8 10"><path d="M0 0 V9.5 L8 4.75Z" fill="#9c9c9c"/></svg>
<svg class="a" style="left:50px;top:239px;overflow:visible" width="19" height="19" viewBox="0 0 19 19"><path d="M0.6 17.4 L2.2 13.6 L9.6 6.6 L11.4 8.4 L4.4 15.8 Z" fill="#e2e2e2" stroke="#1c1c1c" stroke-width="0.8"/><path d="M3 14.5 L10 7.5" stroke="#ffffff" stroke-width="0.9"/><path d="M9.6 8.4 L12.2 5.8" stroke="#2f8a22" stroke-width="4.6"/><path d="M12.6 5.4 L16.9 1.9" stroke="#5cb84a" stroke-width="4.6" stroke-linecap="round"/><path d="M13.2 4.4 L16.6 1.6" stroke="#9ee08a" stroke-width="1.8" stroke-linecap="round"/></svg>
<div class="t" style="left:73px;top:248px;font-size:12.25px;color:#bbbbbb;">search${__V(key${__Random(1,3)})}</div>
<svg class="a" style="left:38px;top:264px;" width="10" height="8" viewBox="0 0 10 8"><path d="M0 0 H9.5 L4.75 8Z" fill="#9c9c9c"/></svg>
<svg class="a" style="left:50px;top:258px;overflow:visible" width="19" height="19" viewBox="0 0 19 19"><path d="M0.6 17.4 L2.2 13.6 L9.6 6.6 L11.4 8.4 L4.4 15.8 Z" fill="#e2e2e2" stroke="#1c1c1c" stroke-width="0.8"/><path d="M3 14.5 L10 7.5" stroke="#ffffff" stroke-width="0.9"/><path d="M9.6 8.4 L12.2 5.8" stroke="#2f8a22" stroke-width="4.6"/><path d="M12.6 5.4 L16.9 1.9" stroke="#5cb84a" stroke-width="4.6" stroke-linecap="round"/><path d="M13.2 4.4 L16.6 1.6" stroke="#9ee08a" stroke-width="1.8" stroke-linecap="round"/></svg>
<div class="t" style="left:73px;top:267px;font-size:12.25px;color:#bbbbbb;">search${__V(key${__Random(1,3)})}</div>
<svg class="a" style="left:57px;top:276px" width="23" height="22" viewBox="0 0 23 22"><path d="M3.5 17 L12.5 8.5" stroke="#bdbdbd" stroke-width="3.2" stroke-linecap="round"/><path d="M4.2 16.3 L11.5 9.5" stroke="#36383a" stroke-width="1.1" stroke-linecap="round"/><circle cx="15.8" cy="5.7" r="3.3" fill="#e6e6e6"/><path d="M16.4 5 L19.8 1.6 L21.4 3.2 L17.8 6.4Z" fill="#3c3f41"/><circle cx="2.8" cy="3" r="1.2" fill="#f0f0f0"/><path d="M2.7 3 L11.5 11.5" stroke="#e8e8e8" stroke-width="1.5" stroke-linecap="round"/><path d="M12.2 12.2 L18.3 17.6" stroke="#c99a00" stroke-width="3.6" stroke-linecap="round"/><path d="M12.2 12.2 L18.3 17.6" stroke="#f6cc10" stroke-width="2.3" stroke-linecap="round"/></svg>
<div class="t" style="left:81px;top:286px;font-size:12.25px;color:#bbbbbb;">HTTP Header Manager</div>
<svg class="a" style="left:34px;top:296px" width="18" height="19" viewBox="0 0 18 19"><path d="M1.5 1.8 V17.4 H17" stroke="#8a8a8a" stroke-width="0.9" stroke-dasharray="1.2 0.8" fill="none"/><path d="M9.3 11 C10 7 11.5 6.3 15.8 5.6 V13.4 L12 15.1 Z" fill="#b8d6f6"/><path d="M3.2 13.5 L8 10.2 L9.3 11 L12 15.1 L15.8 13.4 V17.2 H3.2Z" fill="#f5b2ec"/><path d="M3.2 13.5 L8 10.2 L9.3 11 L12 15.1 L15.8 13.4" stroke="#c8329f" stroke-width="0.9" fill="none"/></svg>
<div class="t" style="left:57px;top:305px;font-size:12.25px;color:#bbbbbb;">Summary Report</div>
<svg class="a" style="left:34px;top:315px" width="18" height="19" viewBox="0 0 18 19"><path d="M1.5 1.8 V17.4 H17" stroke="#8a8a8a" stroke-width="0.9" stroke-dasharray="1.2 0.8" fill="none"/><path d="M9.3 11 C10 7 11.5 6.3 15.8 5.6 V13.4 L12 15.1 Z" fill="#b8d6f6"/><path d="M3.2 13.5 L8 10.2 L9.3 11 L12 15.1 L15.8 13.4 V17.2 H3.2Z" fill="#f5b2ec"/><path d="M3.2 13.5 L8 10.2 L9.3 11 L12 15.1 L15.8 13.4" stroke="#c8329f" stroke-width="0.9" fill="none"/></svg>
<div class="t" style="left:57px;top:324px;font-size:12.25px;color:#bbbbbb;">Aggregate Graph</div>
<svg class="a" style="left:26px;top:334px" width="18" height="19" viewBox="0 0 18 19"><path d="M1.5 1.8 V17.4 H17" stroke="#8a8a8a" stroke-width="0.9" stroke-dasharray="1.2 0.8" fill="none"/><path d="M9.3 11 C10 7 11.5 6.3 15.8 5.6 V13.4 L12 15.1 Z" fill="#b8d6f6"/><path d="M3.2 13.5 L8 10.2 L9.3 11 L12 15.1 L15.8 13.4 V17.2 H3.2Z" fill="#f5b2ec"/><path d="M3.2 13.5 L8 10.2 L9.3 11 L12 15.1 L15.8 13.4" stroke="#c8329f" stroke-width="0.9" fill="none"/></svg>
<div class="t" style="left:49px;top:343px;font-size:12.25px;color:#bbbbbb;">View Results Tree</div>
<svg class="a" style="left:14px;top:358px;" width="8" height="10" viewBox="0 0 8 10"><path d="M0 0 V9.5 L8 4.75Z" fill="#9c9c9c"/></svg>
<svg class="a" style="left:26px;top:354px" width="19" height="17" viewBox="0 0 19 17"><rect x="0.5" y="0.5" width="18" height="16" fill="#fbfbfb" stroke="#d0d0d0"/><rect x="1" y="1" width="17" height="4.5" fill="#d2d2d2"/><path d="M3.8 5.5 V13.5 H6" stroke="#444" stroke-width="0.8" fill="none"/><circle cx="7" cy="8.6" r="2" fill="#1f6fe0"/><circle cx="7" cy="13.2" r="2" fill="#1f6fe0"/><path d="M5.5 8 H8.5 M5.5 12.6 H8.5" stroke="#9cc4ff" stroke-width="0.7"/></svg>
<div class="t" style="left:49px;top:362px;font-size:12.25px;color:#bbbbbb;">HTTP(S) Test Script Recorder</div>
<div class="a" style="left:365px;top:87px;width:979px;height:607px;background:#3c3f41;"></div>
<div class="a" style="left:375px;top:97px;width:969px;height:81px;box-sizing:border-box;border:1px solid #2b2d2e;border-right:none;"></div>
<div class="a" style="left:376px;top:178px;width:968px;height:1px;background:#55585a;"></div>
<div class="t" style="left:376px;top:109px;font-size:16.3px;font-weight:bold;-webkit-text-stroke:0;color:#bbbbbb;">HTTP Request</div>
<div class="a" style="left:376px;top:126px;width:968px;height:1px;background:#2b2d2e;"></div>
<div class="a" style="left:377px;top:127px;width:967px;height:1px;background:#555759;"></div>
<div class="a" style="left:376px;top:126px;width:1px;height:51px;background:#2b2d2e;"></div>
<div class="a" style="left:377px;top:127px;width:1px;height:50px;background:#555759;"></div>
<div class="t" style="left:379px;top:141px;font-size:11.6px;font-weight:bold;-webkit-text-stroke:0;color:#bbbbbb;">Name:</div>
<div class="a" style="left:420px;top:129px;width:930px;height:25px;box-sizing:border-box;border:1px solid #646464;background:#45494a;"></div>
<div class="t" style="left:427px;top:141px;font-size:12.25px;color:#bbbbbb;">search${__V(key${__Random(1,3)})}</div>
<div class="t" style="left:379px;top:168px;font-size:11.6px;font-weight:bold;-webkit-text-stroke:0;color:#bbbbbb;">Comments:</div>
<div class="a" style="left:443px;top:159px;width:901px;height:18px;background:#45494a;"></div>
<svg class="a" style="left:378px;top:179px;" width="26" height="8" viewBox="0 0 26 8"><path d="M0.5 7 L6 1 L11.5 7Z" fill="#c8c8c8" stroke="#2a2a2a" stroke-width="0.5"/><path d="M12 1 L24.5 1 L18.2 7Z" fill="#c8c8c8" stroke="#2a2a2a" stroke-width="0.5"/></svg>
<svg class="a" style="left:864px;top:180px" width="18" height="8" viewBox="0 0 18 8"><circle cx="1.5300000000000002" cy="4.53" r="0.6" fill="#f2f2f2"/><circle cx="2.5700000000000003" cy="5.57" r="0.6" fill="#b0b0b0"/><circle cx="2.45" cy="2.45" r="0.6" fill="#f2f2f2"/><circle cx="3.49" cy="3.49" r="0.6" fill="#b0b0b0"/><circle cx="4.53" cy="4.53" r="0.6" fill="#f2f2f2"/><circle cx="5.57" cy="5.57" r="0.6" fill="#b0b0b0"/><circle cx="5.45" cy="2.45" r="0.6" fill="#f2f2f2"/><circle cx="6.49" cy="3.49" r="0.6" fill="#b0b0b0"/><circle cx="7.53" cy="4.53" r="0.6" fill="#f2f2f2"/><circle cx="8.57" cy="5.57" r="0.6" fill="#b0b0b0"/><circle cx="8.45" cy="2.45" r="0.6" fill="#f2f2f2"/><circle cx="9.489999999999998" cy="3.49" r="0.6" fill="#b0b0b0"/><circle cx="10.53" cy="4.53" r="0.6" fill="#f2f2f2"/><circle cx="11.57" cy="5.57" r="0.6" fill="#b0b0b0"/><circle cx="11.45" cy="2.45" r="0.6" fill="#f2f2f2"/><circle cx="12.489999999999998" cy="3.49" r="0.6" fill="#b0b0b0"/><circle cx="13.53" cy="4.53" r="0.6" fill="#f2f2f2"/><circle cx="14.57" cy="5.57" r="0.6" fill="#b0b0b0"/><circle cx="14.45" cy="2.45" r="0.6" fill="#f2f2f2"/><circle cx="15.489999999999998" cy="3.49" r="0.6" fill="#b0b0b0"/></svg>
<div class="a" style="left:375px;top:188px;width:969px;height:1px;background:#2b2d2e;"></div>
<div class="a" style="left:377px;top:191px;width:44px;height:24px;box-sizing:border-box;border-radius:2px 2px 0 0;background:#42526f;border:1px solid #2b2d2e;border-bottom:none;"></div>
<div class="a" style="left:421px;top:193px;width:67px;height:21px;box-sizing:border-box;border-radius:2px 2px 0 0;border:1px solid #2b2d2e;"></div>
<div class="t" style="left:384px;top:202px;font-size:11.9px;font-weight:bold;-webkit-text-stroke:0;color:#bbbbbb;">Basic</div>
<div class="t" style="left:427px;top:204px;font-size:11.5px;font-weight:bold;-webkit-text-stroke:0;color:#bbbbbb;">Advanced</div>
<div class="a" style="left:488px;top:213px;width:856px;height:1px;background:#2a2b2d;"></div>
<div class="a" style="left:376px;top:214px;width:968px;height:2px;background:#43547a;"></div>
<div class="a" style="left:375px;top:216px;width:2px;height:478px;background:#2b2d2e;"></div>
<div class="a" style="left:380px;top:225px;width:973px;height:41px;box-sizing:border-box;border:1px solid #5a5d5f;"></div>
<div class="a" style="left:379px;top:224px;width:973px;height:41px;box-sizing:border-box;border:1px solid #2b2d2e;"></div>
<div class="a" style="left:384px;top:218px;width:72px;height:12px;background:#3c3f41;"></div>
<div class="t" style="left:386px;top:225px;font-size:12px;font-weight:bold;-webkit-text-stroke:0;color:#bbbbbb;">Web Server</div>
<div class="t" style="left:384px;top:249px;font-size:11.6px;font-weight:bold;-webkit-text-stroke:0;color:#bbbbbb;">Protocol [http]:</div>
<div class="a" style="left:473px;top:237px;width:80px;height:25px;box-sizing:border-box;border:1px solid #646464;background:#45494a;"></div>
<div class="t" style="left:480px;top:249px;font-size:12.25px;color:#bbbbbb;">https</div>
<div class="t" style="left:559px;top:249px;font-size:11.6px;font-weight:bold;-webkit-text-stroke:0;color:#bbbbbb;">Server Name or IP:</div>
<div class="a" style="left:670px;top:237px;width:476px;height:25px;box-sizing:border-box;border:1px solid #646464;background:#45494a;"></div>
<div class="t" style="left:676px;top:249px;font-size:12.25px;color:#bbbbbb;">www.baidu.com</div>
<div class="t" style="left:1150px;top:249px;font-size:11.6px;font-weight:bold;-webkit-text-stroke:0;color:#bbbbbb;">Port Number:</div>
<div class="a" style="left:1231px;top:237px;width:113px;height:25px;box-sizing:border-box;border:1px solid #646464;background:#45494a;"></div>
<div class="t" style="left:1238px;top:249px;font-size:12.25px;color:#bbbbbb;">443</div>
<div class="a" style="left:380px;top:277px;width:973px;height:426px;box-sizing:border-box;border:1px solid #5a5d5f;"></div>
<div class="a" style="left:379px;top:276px;width:973px;height:426px;box-sizing:border-box;border:1px solid #2b2d2e;"></div>
<div class="a" style="left:384px;top:270px;width:86px;height:12px;background:#3c3f41;"></div>
<div class="t" style="left:386px;top:277px;font-size:12px;font-weight:bold;-webkit-text-stroke:0;color:#bbbbbb;">HTTP Request</div>
<div class="t" style="left:388px;top:307px;font-size:11.6px;font-weight:bold;-webkit-text-stroke:0;color:#bbbbbb;">Method:</div>
<div class="a" style="left:439px;top:294px;width:126px;height:25px;box-sizing:border-box;border:1px solid #646464;border-radius:3px;background:#45494a;"></div>
<div class="a" style="left:544px;top:295px;width:1px;height:23px;background:#646464;"></div>
<div class="t" style="left:443px;top:306px;font-size:12.25px;color:#bbbbbb;">GET</div>
<svg class="a" style="left:551px;top:304px;" width="9" height="8" viewBox="0 0 9 8"><path d="M0 0 H9 L4.5 8Z" fill="#bdbdbd"/></svg>
<div class="t" style="left:575px;top:307px;font-size:11.6px;font-weight:bold;-webkit-text-stroke:0;color:#bbbbbb;">Path:</div>
<div class="a" style="left:610px;top:289px;width:561px;height:37px;box-sizing:border-box;border:1px solid #646464;background:#45494a;"></div>
<div class="t" style="left:616px;top:307px;font-size:12.25px;color:#bbbbbb;">/s</div>
<div class="t" style="left:1176px;top:307px;font-size:11.6px;font-weight:bold;-webkit-text-stroke:0;color:#bbbbbb;">Content encoding:</div>
<div class="a" style="left:1284px;top:289px;width:60px;height:37px;box-sizing:border-box;border:1px solid #646464;background:#45494a;"></div>
<div class="a" style="left:394px;top:336px;width:14px;height:13px;box-sizing:border-box;border-radius:2px;background:linear-gradient(#747474,#5e5e5e);border:1px solid #505050;box-shadow:0 1px 0 #222;"></div>
<div class="t" style="left:414px;top:344px;font-size:11px;color:#bbbbbb;-webkit-text-stroke:0.12px currentColor;">Redirect Automatically</div>
<div class="a" style="left:536px;top:336px;width:14px;height:13px;box-sizing:border-box;border-radius:2px;background:linear-gradient(#747474,#5e5e5e);border:1px solid #505050;box-shadow:0 1px 0 #222;"></div>
<svg class="a" style="left:536px;top:336px;overflow:visible" width="15" height="14" viewBox="0 0 15 14"><path d="M2 5.3 L6.1 11.6 L13.9 0.4" stroke="#141414" stroke-width="2.8" fill="none" stroke-linejoin="miter"/><path d="M2.2 4.6 L6.1 10.7 L13.9 -0.2" stroke="#d2d2d2" stroke-width="1.7" fill="none"/></svg>
<div class="t" style="left:556px;top:344px;font-size:10.5px;color:#bbbbbb;-webkit-text-stroke:0.12px currentColor;">Follow Redirects</div>
<div class="a" style="left:647px;top:336px;width:14px;height:13px;box-sizing:border-box;border-radius:2px;background:linear-gradient(#747474,#5e5e5e);border:1px solid #505050;box-shadow:0 1px 0 #222;"></div>
<svg class="a" style="left:647px;top:336px;overflow:visible" width="15" height="14" viewBox="0 0 15 14"><path d="M2 5.3 L6.1 11.6 L13.9 0.4" stroke="#141414" stroke-width="2.8" fill="none" stroke-linejoin="miter"/><path d="M2.2 4.6 L6.1 10.7 L13.9 -0.2" stroke="#d2d2d2" stroke-width="1.7" fill="none"/></svg>
<div class="t" style="left:667px;top:344px;font-size:10.5px;color:#bbbbbb;-webkit-text-stroke:0.12px currentColor;">Use KeepAlive</div>
<div class="a" style="left:749px;top:336px;width:14px;height:13px;box-sizing:border-box;border-radius:2px;background:linear-gradient(#747474,#5e5e5e);border:1px solid #505050;box-shadow:0 1px 0 #222;"></div>
<div class="t" style="left:769px;top:344px;font-size:10.5px;color:#8a8a8a;-webkit-text-stroke:0.12px currentColor;">Use multipart/form-data for POST</div>
<div class="a" style="left:939px;top:336px;width:14px;height:13px;box-sizing:border-box;border-radius:2px;background:linear-gradient(#747474,#5e5e5e);border:1px solid #505050;box-shadow:0 1px 0 #222;"></div>
<div class="t" style="left:959px;top:344px;font-size:10.5px;color:#bbbbbb;-webkit-text-stroke:0.12px currentColor;">Browser-compatible headers</div>
<div class="a" style="left:384px;top:362px;width:80px;height:25px;box-sizing:border-box;border-radius:2px 2px 0 0;background:#42526f;border:1px solid #2b2d2e;border-bottom:none;"></div>
<div class="a" style="left:464px;top:364px;width:68px;height:22px;box-sizing:border-box;border-radius:2px 2px 0 0;border:1px solid #2b2d2e;"></div>
<div class="a" style="left:532px;top:364px;width:79px;height:22px;box-sizing:border-box;border-radius:2px 2px 0 0;border:1px solid #2b2d2e;"></div>
<div class="t" style="left:391px;top:373px;font-size:12.3px;font-weight:bold;-webkit-text-stroke:0;color:#bbbbbb;">Parameters</div>
<div class="t" style="left:470px;top:375px;font-size:11.4px;font-weight:bold;-webkit-text-stroke:0;color:#bbbbbb;">Body Data</div>
<div class="t" style="left:538px;top:375px;font-size:11.4px;font-weight:bold;-webkit-text-stroke:0;color:#bbbbbb;">Files Upload</div>
<div class="a" style="left:611px;top:384px;width:733px;height:1px;background:#2a2b2d;"></div>
<div class="a" style="left:384px;top:385px;width:960px;height:2px;background:#43547a;"></div>
<div class="a" style="left:384px;top:387px;width:1px;height:307px;background:#2b2d2e;"></div>
<div class="t" style="left:763px;top:401px;font-size:12px;font-weight:bold;-webkit-text-stroke:0;color:#bbbbbb;">Send Parameters With the Request:</div>
<div class="a" style="left:384px;top:415px;width:960px;height:1px;background:#2b2d2e;"></div>
<div class="a" style="left:385px;top:416px;width:958px;height:17px;background:linear-gradient(#54585a,#3f4244);"></div>
<div class="a" style="left:385px;top:433px;width:958px;height:1px;background:#2b2d2e;"></div>
<div class="a" style="left:784px;top:417px;width:1px;height:16px;background:#2f3133;"></div>
<div class="a" style="left:785px;top:417px;width:1px;height:16px;background:#606366;"></div>
<div class="a" style="left:1183px;top:417px;width:1px;height:16px;background:#2f3133;"></div>
<div class="a" style="left:1184px;top:417px;width:1px;height:16px;background:#606366;"></div>
<div class="a" style="left:1242px;top:417px;width:1px;height:16px;background:#2f3133;"></div>
<div class="a" style="left:1243px;top:417px;width:1px;height:16px;background:#606366;"></div>
<div class="a" style="left:1341px;top:416px;width:1px;height:226px;background:#2b2d2e;"></div>
<div class="a" style="left:1342px;top:416px;width:1px;height:245px;background:#2b2d2e;"></div>
<div class="a" style="left:1343px;top:416px;width:1px;height:247px;background:#6b6d6f;"></div>
<div class="t" style="left:567px;top:425px;font-size:12.25px;color:#bbbbbb;">Name:</div>
<div class="t" style="left:968px;top:425px;font-size:12.25px;color:#bbbbbb;">Value</div>
<div class="t" style="left:1189px;top:425px;font-size:12.25px;color:#bbbbbb;">Encode?</div>
<div class="t" style="left:1248px;top:425px;font-size:12.25px;color:#bbbbbb;">Include Equals?</div>
<div class="a" style="left:385px;top:449px;width:957px;height:1px;background:#2b2d2e;"></div>
<div class="t" style="left:386px;top:441px;font-size:12px;color:#bbbbbb;">ie</div>
<div class="t" style="left:786px;top:441px;font-size:12px;color:#bbbbbb;">utf-8</div>
<div class="a" style="left:1207px;top:434px;width:14px;height:13px;box-sizing:border-box;border-radius:2px;background:linear-gradient(#747474,#5e5e5e);border:1px solid #505050;box-shadow:0 1px 0 #222;"></div>
<div class="a" style="left:1286px;top:434px;width:14px;height:13px;box-sizing:border-box;border-radius:2px;background:linear-gradient(#747474,#5e5e5e);border:1px solid #505050;box-shadow:0 1px 0 #222;"></div>
<svg class="a" style="left:1286px;top:434px;overflow:visible" width="15" height="14" viewBox="0 0 15 14"><path d="M2 5.3 L6.1 11.6 L13.9 0.4" stroke="#141414" stroke-width="2.8" fill="none" stroke-linejoin="miter"/><path d="M2.2 4.6 L6.1 10.7 L13.9 -0.2" stroke="#d2d2d2" stroke-width="1.7" fill="none"/></svg>
<div class="a" style="left:385px;top:465px;width:957px;height:1px;background:#2b2d2e;"></div>
<div class="t" style="left:386px;top:457px;font-size:12px;color:#bbbbbb;">f</div>
<div class="t" style="left:786px;top:457px;font-size:12px;color:#bbbbbb;">8</div>
<div class="a" style="left:1207px;top:450px;width:14px;height:13px;box-sizing:border-box;border-radius:2px;background:linear-gradient(#747474,#5e5e5e);border:1px solid #505050;box-shadow:0 1px 0 #222;"></div>
<div class="a" style="left:1286px;top:450px;width:14px;height:13px;box-sizing:border-box;border-radius:2px;background:linear-gradient(#747474,#5e5e5e);border:1px solid #505050;box-shadow:0 1px 0 #222;"></div>
<svg class="a" style="left:1286px;top:450px;overflow:visible" width="15" height="14" viewBox="0 0 15 14"><path d="M2 5.3 L6.1 11.6 L13.9 0.4" stroke="#141414" stroke-width="2.8" fill="none" stroke-linejoin="miter"/><path d="M2.2 4.6 L6.1 10.7 L13.9 -0.2" stroke="#d2d2d2" stroke-width="1.7" fill="none"/></svg>
<div class="a" style="left:385px;top:481px;width:957px;height:1px;background:#2b2d2e;"></div>
<div class="t" style="left:386px;top:473px;font-size:12px;color:#bbbbbb;">rsv_bp</div>
<div class="t" style="left:786px;top:473px;font-size:12px;color:#bbbbbb;">1</div>
<div class="a" style="left:1207px;top:466px;width:14px;height:13px;box-sizing:border-box;border-radius:2px;background:linear-gradient(#747474,#5e5e5e);border:1px solid #505050;box-shadow:0 1px 0 #222;"></div>
<div class="a" style="left:1286px;top:466px;width:14px;height:13px;box-sizing:border-box;border-radius:2px;background:linear-gradient(#747474,#5e5e5e);border:1px solid #505050;box-shadow:0 1px 0 #222;"></div>
<svg class="a" style="left:1286px;top:466px;overflow:visible" width="15" height="14" viewBox="0 0 15 14"><path d="M2 5.3 L6.1 11.6 L13.9 0.4" stroke="#141414" stroke-width="2.8" fill="none" stroke-linejoin="miter"/><path d="M2.2 4.6 L6.1 10.7 L13.9 -0.2" stroke="#d2d2d2" stroke-width="1.7" fill="none"/></svg>
<div class="a" style="left:385px;top:497px;width:957px;height:1px;background:#2b2d2e;"></div>
<div class="t" style="left:386px;top:489px;font-size:12px;color:#bbbbbb;">rsv_idx</div>
<div class="t" style="left:786px;top:489px;font-size:12px;color:#bbbbbb;">1</div>
<div class="a" style="left:1207px;top:482px;width:14px;height:13px;box-sizing:border-box;border-radius:2px;background:linear-gradient(#747474,#5e5e5e);border:1px solid #505050;box-shadow:0 1px 0 #222;"></div>
<div class="a" style="left:1286px;top:482px;width:14px;height:13px;box-sizing:border-box;border-radius:2px;background:linear-gradient(#747474,#5e5e5e);border:1px solid #505050;box-shadow:0 1px 0 #222;"></div>
<svg class="a" style="left:1286px;top:482px;overflow:visible" width="15" height="14" viewBox="0 0 15 14"><path d="M2 5.3 L6.1 11.6 L13.9 0.4" stroke="#141414" stroke-width="2.8" fill="none" stroke-linejoin="miter"/><path d="M2.2 4.6 L6.1 10.7 L13.9 -0.2" stroke="#d2d2d2" stroke-width="1.7" fill="none"/></svg>
<div class="a" style="left:385px;top:513px;width:957px;height:1px;background:#2b2d2e;"></div>
<div class="t" style="left:386px;top:505px;font-size:12px;color:#bbbbbb;">ch</div>
<div class="t" style="left:786px;top:505px;font-size:12px;color:#bbbbbb;"></div>
<div class="a" style="left:1207px;top:498px;width:14px;height:13px;box-sizing:border-box;border-radius:2px;background:linear-gradient(#747474,#5e5e5e);border:1px solid #505050;box-shadow:0 1px 0 #222;"></div>
<div class="a" style="left:1286px;top:498px;width:14px;height:13px;box-sizing:border-box;border-radius:2px;background:linear-gradient(#747474,#5e5e5e);border:1px solid #505050;box-shadow:0 1px 0 #222;"></div>
<svg class="a" style="left:1286px;top:498px;overflow:visible" width="15" height="14" viewBox="0 0 15 14"><path d="M2 5.3 L6.1 11.6 L13.9 0.4" stroke="#141414" stroke-width="2.8" fill="none" stroke-linejoin="miter"/><path d="M2.2 4.6 L6.1 10.7 L13.9 -0.2" stroke="#d2d2d2" stroke-width="1.7" fill="none"/></svg>
<div class="a" style="left:385px;top:529px;width:957px;height:1px;background:#2b2d2e;"></div>
<div class="t" style="left:386px;top:521px;font-size:12px;color:#bbbbbb;">tn</div>
<div class="t" style="left:786px;top:521px;font-size:12px;color:#bbbbbb;">baidu</div>
<div class="a" style="left:1207px;top:514px;width:14px;height:13px;box-sizing:border-box;border-radius:2px;background:linear-gradient(#747474,#5e5e5e);border:1px solid #505050;box-shadow:0 1px 0 #222;"></div>
<div class="a" style="left:1286px;top:514px;width:14px;height:13px;box-sizing:border-box;border-radius:2px;background:linear-gradient(#747474,#5e5e5e);border:1px solid #505050;box-shadow:0 1px 0 #222;"></div>
<svg class="a" style="left:1286px;top:514px;overflow:visible" width="15" height="14" viewBox="0 0 15 14"><path d="M2 5.3 L6.1 11.6 L13.9 0.4" stroke="#141414" stroke-width="2.8" fill="none" stroke-linejoin="miter"/><path d="M2.2 4.6 L6.1 10.7 L13.9 -0.2" stroke="#d2d2d2" stroke-width="1.7" fill="none"/></svg>
<div class="a" style="left:385px;top:545px;width:957px;height:1px;background:#2b2d2e;"></div>
<div class="t" style="left:386px;top:537px;font-size:12px;color:#bbbbbb;">bar</div>
<div class="t" style="left:786px;top:537px;font-size:12px;color:#bbbbbb;"></div>
<div class="a" style="left:1207px;top:530px;width:14px;height:13px;box-sizing:border-box;border-radius:2px;background:linear-gradient(#747474,#5e5e5e);border:1px solid #505050;box-shadow:0 1px 0 #222;"></div>
<div class="a" style="left:1286px;top:530px;width:14px;height:13px;box-sizing:border-box;border-radius:2px;background:linear-gradient(#747474,#5e5e5e);border:1px solid #505050;box-shadow:0 1px 0 #222;"></div>
<svg class="a" style="left:1286px;top:530px;overflow:visible" width="15" height="14" viewBox="0 0 15 14"><path d="M2 5.3 L6.1 11.6 L13.9 0.4" stroke="#141414" stroke-width="2.8" fill="none" stroke-linejoin="miter"/><path d="M2.2 4.6 L6.1 10.7 L13.9 -0.2" stroke="#d2d2d2" stroke-width="1.7" fill="none"/></svg>
<div class="a" style="left:385px;top:561px;width:957px;height:1px;background:#2b2d2e;"></div>
<div class="t" style="left:386px;top:553px;font-size:12px;color:#bbbbbb;">wd</div>
<div class="t" style="left:786px;top:553px;font-size:12px;color:#bbbbbb;"><span style="-webkit-text-stroke:0;font-size:11.5px">淘宝</span>${__V(key${__Random(1,3)})}</div>
<div class="a" style="left:1207px;top:546px;width:14px;height:13px;box-sizing:border-box;border-radius:2px;background:linear-gradient(#747474,#5e5e5e);border:1px solid #505050;box-shadow:0 1px 0 #222;"></div>
<svg class="a" style="left:1207px;top:546px;overflow:visible" width="15" height="14" viewBox="0 0 15 14"><path d="M2 5.3 L6.1 11.6 L13.9 0.4" stroke="#141414" stroke-width="2.8" fill="none" stroke-linejoin="miter"/><path d="M2.2 4.6 L6.1 10.7 L13.9 -0.2" stroke="#d2d2d2" stroke-width="1.7" fill="none"/></svg>
<div class="a" style="left:1286px;top:546px;width:14px;height:13px;box-sizing:border-box;border-radius:2px;background:linear-gradient(#747474,#5e5e5e);border:1px solid #505050;box-shadow:0 1px 0 #222;"></div>
<svg class="a" style="left:1286px;top:546px;overflow:visible" width="15" height="14" viewBox="0 0 15 14"><path d="M2 5.3 L6.1 11.6 L13.9 0.4" stroke="#141414" stroke-width="2.8" fill="none" stroke-linejoin="miter"/><path d="M2.2 4.6 L6.1 10.7 L13.9 -0.2" stroke="#d2d2d2" stroke-width="1.7" fill="none"/></svg>
<div class="a" style="left:385px;top:577px;width:957px;height:1px;background:#2b2d2e;"></div>
<div class="t" style="left:386px;top:569px;font-size:12px;color:#bbbbbb;">rn</div>
<div class="t" style="left:786px;top:569px;font-size:12px;color:#bbbbbb;"></div>
<div class="a" style="left:1207px;top:562px;width:14px;height:13px;box-sizing:border-box;border-radius:2px;background:linear-gradient(#747474,#5e5e5e);border:1px solid #505050;box-shadow:0 1px 0 #222;"></div>
<div class="a" style="left:1286px;top:562px;width:14px;height:13px;box-sizing:border-box;border-radius:2px;background:linear-gradient(#747474,#5e5e5e);border:1px solid #505050;box-shadow:0 1px 0 #222;"></div>
<svg class="a" style="left:1286px;top:562px;overflow:visible" width="15" height="14" viewBox="0 0 15 14"><path d="M2 5.3 L6.1 11.6 L13.9 0.4" stroke="#141414" stroke-width="2.8" fill="none" stroke-linejoin="miter"/><path d="M2.2 4.6 L6.1 10.7 L13.9 -0.2" stroke="#d2d2d2" stroke-width="1.7" fill="none"/></svg>
<div class="a" style="left:385px;top:593px;width:957px;height:1px;background:#2b2d2e;"></div>
<div class="t" style="left:386px;top:585px;font-size:12px;color:#bbbbbb;">oq</div>
<div class="t" style="left:786px;top:585px;font-size:12px;color:#bbbbbb;"></div>
<div class="a" style="left:1207px;top:578px;width:14px;height:13px;box-sizing:border-box;border-radius:2px;background:linear-gradient(#747474,#5e5e5e);border:1px solid #505050;box-shadow:0 1px 0 #222;"></div>
<div class="a" style="left:1286px;top:578px;width:14px;height:13px;box-sizing:border-box;border-radius:2px;background:linear-gradient(#747474,#5e5e5e);border:1px solid #505050;box-shadow:0 1px 0 #222;"></div>
<svg class="a" style="left:1286px;top:578px;overflow:visible" width="15" height="14" viewBox="0 0 15 14"><path d="M2 5.3 L6.1 11.6 L13.9 0.4" stroke="#141414" stroke-width="2.8" fill="none" stroke-linejoin="miter"/><path d="M2.2 4.6 L6.1 10.7 L13.9 -0.2" stroke="#d2d2d2" stroke-width="1.7" fill="none"/></svg>
<div class="a" style="left:385px;top:609px;width:957px;height:1px;background:#2b2d2e;"></div>
<div class="t" style="left:386px;top:601px;font-size:12px;color:#bbbbbb;">rsv_pq</div>
<div class="t" style="left:786px;top:601px;font-size:12px;color:#bbbbbb;">92521d0e00004951</div>
<div class="a" style="left:1207px;top:594px;width:14px;height:13px;box-sizing:border-box;border-radius:2px;background:linear-gradient(#747474,#5e5e5e);border:1px solid #505050;box-shadow:0 1px 0 #222;"></div>
<div class="a" style="left:1286px;top:594px;width:14px;height:13px;box-sizing:border-box;border-radius:2px;background:linear-gradient(#747474,#5e5e5e);border:1px solid #505050;box-shadow:0 1px 0 #222;"></div>
<svg class="a" style="left:1286px;top:594px;overflow:visible" width="15" height="14" viewBox="0 0 15 14"><path d="M2 5.3 L6.1 11.6 L13.9 0.4" stroke="#141414" stroke-width="2.8" fill="none" stroke-linejoin="miter"/><path d="M2.2 4.6 L6.1 10.7 L13.9 -0.2" stroke="#d2d2d2" stroke-width="1.7" fill="none"/></svg>
<div class="a" style="left:385px;top:625px;width:957px;height:1px;background:#2b2d2e;"></div>
<div class="t" style="left:386px;top:617px;font-size:12px;color:#bbbbbb;">rsv_t</div>
<div class="t" style="left:786px;top:617px;font-size:12px;color:#bbbbbb;">8ac2zLUFoV6h1S%2BSqlTw6%2BMQKlccKZQfa0hOx1Sy7JdCvT9xb%...</div>
<div class="a" style="left:1207px;top:610px;width:14px;height:13px;box-sizing:border-box;border-radius:2px;background:linear-gradient(#747474,#5e5e5e);border:1px solid #505050;box-shadow:0 1px 0 #222;"></div>
<div class="a" style="left:1286px;top:610px;width:14px;height:13px;box-sizing:border-box;border-radius:2px;background:linear-gradient(#747474,#5e5e5e);border:1px solid #505050;box-shadow:0 1px 0 #222;"></div>
<svg class="a" style="left:1286px;top:610px;overflow:visible" width="15" height="14" viewBox="0 0 15 14"><path d="M2 5.3 L6.1 11.6 L13.9 0.4" stroke="#141414" stroke-width="2.8" fill="none" stroke-linejoin="miter"/><path d="M2.2 4.6 L6.1 10.7 L13.9 -0.2" stroke="#d2d2d2" stroke-width="1.7" fill="none"/></svg>
<div class="a" style="left:385px;top:641px;width:957px;height:1px;background:#2b2d2e;"></div>
<div class="t" style="left:386px;top:633px;font-size:12px;color:#bbbbbb;">rqlang</div>
<div class="t" style="left:786px;top:633px;font-size:12px;color:#bbbbbb;">cn</div>
<div class="a" style="left:1207px;top:626px;width:14px;height:13px;box-sizing:border-box;border-radius:2px;background:linear-gradient(#747474,#5e5e5e);border:1px solid #505050;box-shadow:0 1px 0 #222;"></div>
<div class="a" style="left:1286px;top:626px;width:14px;height:13px;box-sizing:border-box;border-radius:2px;background:linear-gradient(#747474,#5e5e5e);border:1px solid #505050;box-shadow:0 1px 0 #222;"></div>
<svg class="a" style="left:1286px;top:626px;overflow:visible" width="15" height="14" viewBox="0 0 15 14"><path d="M2 5.3 L6.1 11.6 L13.9 0.4" stroke="#141414" stroke-width="2.8" fill="none" stroke-linejoin="miter"/><path d="M2.2 4.6 L6.1 10.7 L13.9 -0.2" stroke="#d2d2d2" stroke-width="1.7" fill="none"/></svg>
<div class="a" style="left:784px;top:434px;width:1px;height:208px;background:#2b2d2e;"></div>
<div class="a" style="left:1183px;top:434px;width:1px;height:208px;background:#2b2d2e;"></div>
<div class="a" style="left:1242px;top:434px;width:1px;height:208px;background:#2b2d2e;"></div>
<div class="a" style="left:384px;top:660px;width:960px;height:1px;background:#2b2d2e;"></div>
<div class="a" style="left:384px;top:661px;width:960px;height:1px;background:#3c3f41;"></div>
<div class="a" style="left:384px;top:662px;width:960px;height:1px;background:#6b6d6f;"></div>
<div class="a" style="left:642px;top:672px;width:55px;height:30px;box-sizing:border-box;border:1px solid #5b5e60;border-radius:4px;background:linear-gradient(#505456,#45494b);"></div>
<div class="t" style="left:654px;top:685px;font-size:11.5px;font-weight:bold;-webkit-text-stroke:0;color:#bbbbbb;">Detail</div>
<div class="a" style="left:709px;top:672px;width:45px;height:30px;box-sizing:border-box;border:1px solid #5b5e60;border-radius:4px;background:linear-gradient(#505456,#45494b);"></div>
<div class="t" style="left:721px;top:685px;font-size:11.5px;font-weight:bold;-webkit-text-stroke:0;color:#bbbbbb;">Add</div>
<div class="a" style="left:766px;top:672px;width:132px;height:30px;box-sizing:border-box;border:1px solid #5b5e60;border-radius:4px;background:linear-gradient(#505456,#45494b);"></div>
<div class="t" style="left:778px;top:685px;font-size:11.5px;font-weight:bold;-webkit-text-stroke:0;color:#bbbbbb;">Add from Clipboard</div>
<div class="a" style="left:910px;top:672px;width:59px;height:30px;box-sizing:border-box;border:1px solid #5b5e60;border-radius:4px;background:linear-gradient(#505456,#45494b);"></div>
<div class="t" style="left:922px;top:685px;font-size:11.5px;font-weight:bold;-webkit-text-stroke:0;color:#bbbbbb;">Delete</div>
<div class="a" style="left:981px;top:672px;width:38px;height:30px;box-sizing:border-box;border:1px solid #5b5e60;border-radius:4px;background:linear-gradient(#505456,#45494b);"></div>
<div class="t" style="left:993px;top:685px;font-size:11.5px;font-weight:bold;-webkit-text-stroke:0;color:#bbbbbb;">Up</div>
<div class="a" style="left:1031px;top:672px;width:55px;height:30px;box-sizing:border-box;border:1px solid #5b5e60;border-radius:4px;background:linear-gradient(#505456,#45494b);"></div>
<div class="t" style="left:1043px;top:685px;font-size:11.5px;font-weight:bold;-webkit-text-stroke:0;color:#bbbbbb;">Down</div>
</body></html>
